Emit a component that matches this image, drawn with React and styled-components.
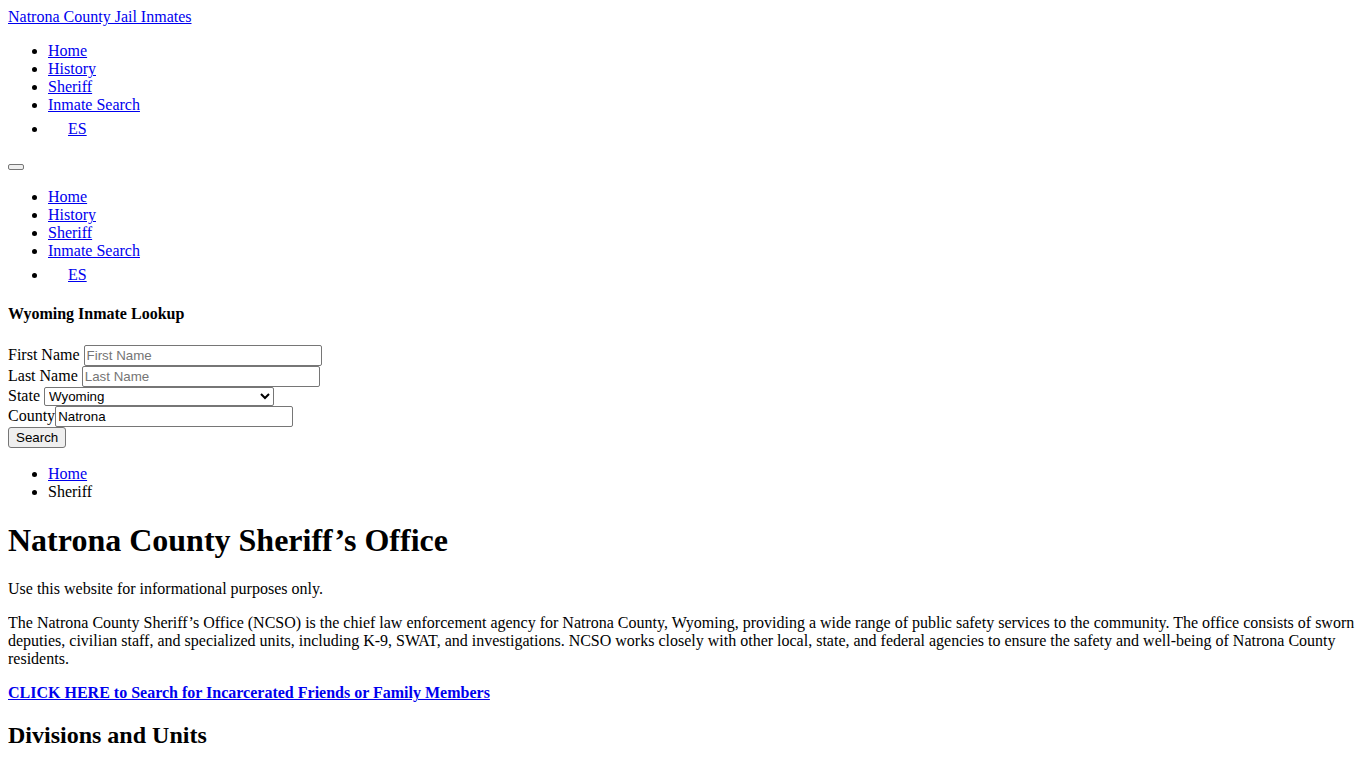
import React from "react";
import styled, { createGlobalStyle } from "styled-components";

const Global = createGlobalStyle`
  body {
    margin: 8px;
    font-family: "Liberation Serif", "Times New Roman", serif;
    font-size: 16px;
    color: #000;
    background: #fff;
  }
`;

const Link = styled.a`
  color: #0000ee;
  text-decoration: underline;
  cursor: pointer;
`;

const Brand = styled.div``;

const NavList = styled.ul`
  margin: 16px 0;
  padding-left: 40px;
  list-style: disc;
`;

const NavItem = styled.li``;

const Flag = styled.span`
  display: inline-block;
  width: 16px;
  height: 20px;
  margin-right: 4px;
  vertical-align: baseline;
`;

const Toggle = styled.button`
  padding: 1px 6px;
  border: 1px solid #767676;
  border-radius: 2px;
  background: #efefef;
  width: 16px;
  height: 6px;
  font-size: 13.33px;
  vertical-align: baseline;
`;

const ToggleRow = styled.div``;

const LookupTitle = styled.h4`
  font-size: 16px;
  font-weight: bold;
  margin: 21.28px 0;
`;

const Form = styled.form`
  margin: 0 0 17px;
`;

const Field = styled.div``;

const Input = styled.input`
  font-family: "Liberation Sans", Arial, sans-serif;
  font-size: 13.33px;
  padding: 1px 2px;
  border: 1px solid #767676;
  border-radius: 2px;
  width: ${(p) => p.$w}px;
  box-sizing: border-box;
  height: 21px;
  color: #000;
  &::placeholder {
    color: #757575;
  }
`;

const Select = styled.select`
  font-family: "Liberation Sans", Arial, sans-serif;
  font-size: 13.33px;
  border: 1px solid #767676;
  border-radius: 2px;
  width: 230px;
  height: 19px;
  padding: 0;
  color: #000;
  background: #fff;
`;

const SubmitBtn = styled.button`
  font-family: "Liberation Sans", Arial, sans-serif;
  font-size: 13.33px;
  padding: 1px 7px;
  border: 1px solid #767676;
  border-radius: 3px;
  background: #efefef;
  color: #000;
  height: 21px;
`;

const Crumbs = styled.ul`
  margin: 16px 0;
  padding-left: 40px;
`;

const Title = styled.h1`
  font-size: 32px;
  font-weight: bold;
  margin: 21.44px 0;
`;

const Para = styled.p`
  margin: 16px 0;
`;

const Strong = styled.strong`
  font-weight: bold;
`;

const SubTitle = styled.h2`
  font-size: 24px;
  font-weight: bold;
  margin: 19.92px 0;
`;

const navItems = ["Home", "History", "Sheriff", "Inmate Search"];

function Nav() {
  return (
    <NavList>
      {navItems.map((n) => (
        <NavItem key={n}>
          <Link>{n}</Link>
        </NavItem>
      ))}
      <NavItem>
        <Flag />
        <Link>ES</Link>
      </NavItem>
    </NavList>
  );
}

export default function App() {
  return (
    <>
      <Global />
      <Brand>
        <Link>Natrona County Jail Inmates</Link>
      </Brand>
      <Nav />
      <ToggleRow>
        <Toggle aria-label="menu" />
      </ToggleRow>
      <Nav />
      <LookupTitle>Wyoming Inmate Lookup</LookupTitle>
      <Form onSubmit={(e) => e.preventDefault()}>
        <Field>
          First Name <Input $w={238} placeholder="First Name" />
        </Field>
        <Field>
          Last Name <Input $w={238} placeholder="Last Name" />
        </Field>
        <Field>
          State{" "}
          <Select defaultValue="Wyoming">
            <option>Wyoming</option>
          </Select>
        </Field>
        <Field>
          County<Input $w={238} defaultValue="Natrona" />
        </Field>
        <SubmitBtn type="submit">Search</SubmitBtn>
      </Form>
      <Crumbs>
        <li>
          <Link>Home</Link>
        </li>
        <li>Sheriff</li>
      </Crumbs>
      <Title>Natrona County Sheriff’s Office</Title>
      <Para>Use this website for informational purposes only.</Para>
      <Para>
        The Natrona County Sheriff’s Office (NCSO) is the chief law enforcement agency for Natrona County, Wyoming, providing a wide range of public safety services to the community. The office consists of sworn deputies, civilian staff, and specialized units, including K-9, SWAT, and investigations. NCSO works closely with other local, state, and federal agencies to ensure the safety and well-being of Natrona County residents.
      </Para>
      <Para>
        <Link>
          <Strong>CLICK HERE to Search for Incarcerated Friends or Family Members</Strong>
        </Link>
      </Para>
      <SubTitle>Divisions and Units</SubTitle>
    </>
  );
}
